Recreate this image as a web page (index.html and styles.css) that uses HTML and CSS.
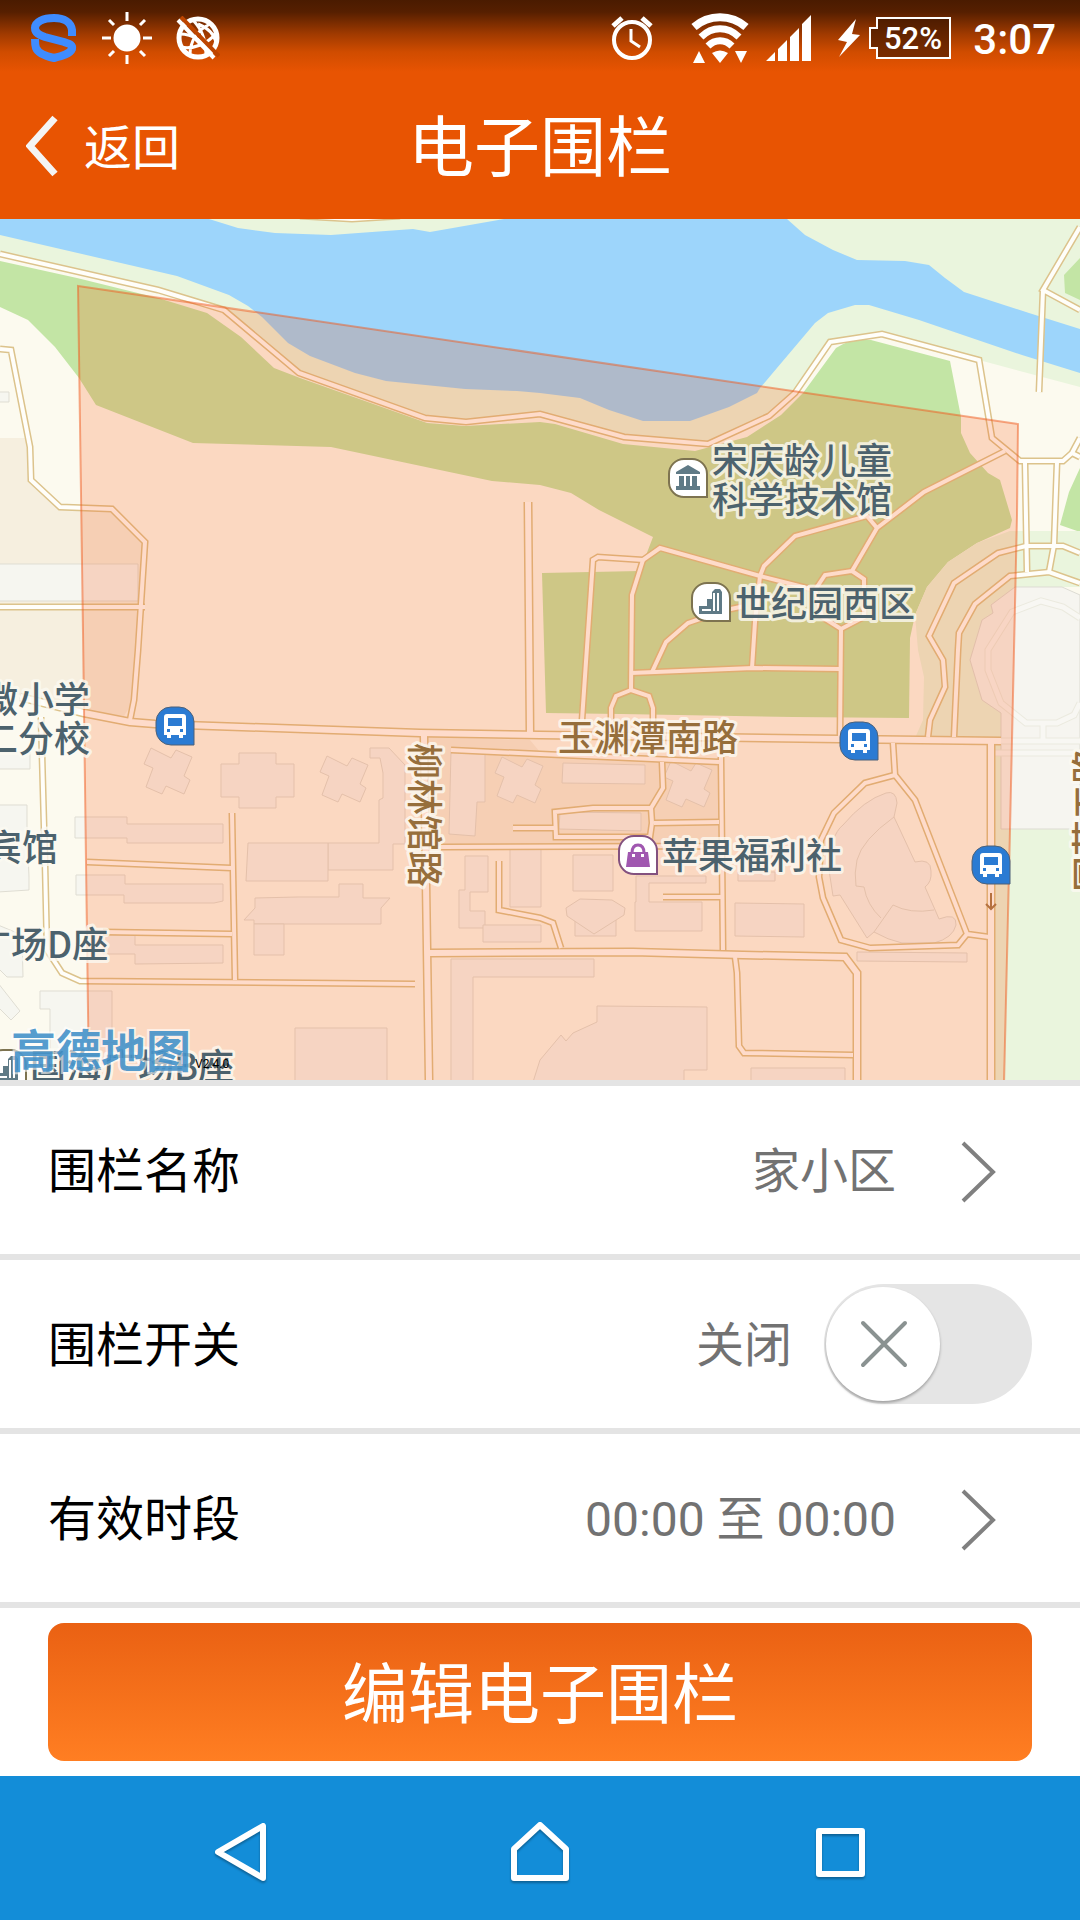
FILE: index.html
```html
<!DOCTYPE html>
<html lang="zh-CN">
<head>
  <meta charset="UTF-8">
  <meta name="viewport" content="width=device-width, initial-scale=1.0">
  <title>电子围栏</title>
  <link rel="stylesheet" href="styles.css">
</head>
<body>

  <div class="top">
    <div class="status-bar">
      <div class="status-left">
        <svg width="48" height="50" viewBox="0 0 48 50" fill="none" stroke="#3f8cff" stroke-width="8">
          <path d="M42 23V17C41 9 34 5 24 5C13 5 5 9 5 15C5 20 9 22 15 24L34 29C40 31 43 32 42 36C40 41 32 43 24 45C15 43 8 40 6 35C5 32 5 29 5 26"/>
        </svg>
        <svg width="50" height="52" viewBox="0 0 50 52" fill="#fff" stroke="#fff" stroke-width="3">
          <circle cx="25" cy="26" r="12"/>
          <path d="M25 0V9M25 43V52M0 26H9M41 26H50M7 8L12 13M38 39L43 44M43 8L38 13M12 39L7 44"/>
        </svg>
        <svg width="44" height="44" viewBox="0 0 44 44" fill="none" stroke="#fff">
          <circle cx="22" cy="22" r="19" stroke-width="5"/>
          <path stroke-width="3" d="M17 4C24 12 30 20 30 40M34 8C22 14 14 24 14 39M4 18C16 18 30 26 34 36M5 31C16 34 32 28 40 17M22 8C32 12 38 18 40 26"/>
          <path stroke="#bd4500" stroke-width="4" d="M5 1L43 40"/>
          <path stroke-width="4" d="M2 4L38 42"/>
        </svg>
      </div>
      <div class="status-right">
        <svg class="alarm" width="42" height="46" viewBox="0 0 42 46" fill="none" stroke="#fff">
          <circle cx="21" cy="25" r="18" stroke-width="4"/>
          <path stroke-width="3" d="M20 14V26L29 32"/>
          <path stroke-width="5" d="M2 11L11 3M40 11L31 3"/>
        </svg>
        <svg class="wifi" width="58" height="50" viewBox="0 0 58 50" fill="none" stroke="#fff">
          <path stroke-width="8" d="M3 14C18 1 40 1 55 14"/>
          <path stroke-width="7" d="M10 24C21 13 37 13 48 24"/>
          <path stroke-width="7" d="M17 33C24 26 34 26 41 33"/>
          <path fill="#fff" stroke="none" d="M21 40Q29 35 37 40L29 50ZM2 50H14L8 38ZM44 38H56L50 50Z"/>
        </svg>
        <svg class="signal" width="46" height="46" viewBox="0 0 46 46" fill="#fff">
          <path d="M0 46L9 37V46ZM12 34L21 25V46H12ZM24 22L33 13V46H24ZM36 9L45 0V46H36Z"/>
        </svg>
        <svg class="bolt" width="24" height="38" viewBox="0 0 24 38" fill="#fff">
          <path d="M19 0L1 21L10 23L2 38L23 16L15 15Z"/>
        </svg>
        <svg class="battery" width="82" height="42" viewBox="0 0 82 42">
          <path d="M8 1H81V41H8V31H1V11H8Z" fill="#3a1500" fill-opacity=".6" stroke="#fff" stroke-width="2"/>
          <text x="44" y="32" text-anchor="middle">52%</text>
        </svg>
        <span class="clock">3:07</span>
      </div>
    </div>

    <header class="app-bar">
      <button class="back">
        <svg width="34" height="62" viewBox="0 0 34 62" fill="none" stroke="#f4f4f4" stroke-width="7">
          <path d="M29 3L4 31L29 59"/>
        </svg>
        返回
      </button>
      <h1>电子围栏</h1>
    </header>
  </div>

  <main>
    <svg class="map" viewBox="0 219 1080 861" role="img" aria-label="高德地图">
      <defs>
        <path id="tower" d="M151 748L171 758L176 750L192 757L184 776L190 780L184 794L166 786L162 794L146 787L153 768L144 764Z"/>
        <g id="small-roads">
          <path d="M0 254L158 290L224 310L299 373L425 418L466 422L540 414L624 437L708 444L769 416L795 393L830 342L882 334L979 360L992 438L1020 461L1063 461L1072 453L1080 438M1072 453L1080 457"/>
          <path d="M300 216L352 219L400 216"/>
          <path d="M0 349L11 350L30 447L31 480L60 507L112 509L145 542L138 650L134 700L130 720M0 607H145"/>
          <path d="M41 717L45 863L47 950L62 973L80 981L415 984"/>
          <path d="M232 813L233 870L235 980M87 862L231 868M103 932L232 934"/>
          <path d="M441 847L721 846M451 750L540 754L719 762M513 828H554M721 757L723 950"/>
          <path d="M662 762L663 788L651 808L593 808L555 812L556 837L650 837L652 823L651 808M654 823L719 822"/>
          <path d="M663 897H721M735 957L737 973L739 1046L744 1053L853 1055"/>
          <path d="M499 861V910L540 918L553 923L561 948"/>
          <path d="M893 743L895 775L865 783L834 813L821 840L819 877L823 898L841 940L870 948L958 945L967 934L915 800L895 775M967 934L989 937"/>
          <path d="M1080 227L1043 290L1080 310M1043 290L1039 392"/>
          <path d="M1025 463L1027 572M1057 462L1054 545L1049 572"/>
          <path d="M1080 553L1063 546H1026L998 553L954 583L929 636L943 660L945 687L930 720L928 737"/>
          <path d="M1080 583L1049 572L1010 576L975 604L959 633L958 650L954 737"/>
        </g>
        <g id="park-paths">
          <path d="M582 720L593 560L598 557L643 560L660 548L760 576L815 590"/>
          <path d="M643 560L632 595L631 690L616 696L611 708V722M631 690L649 696L653 708V722"/>
          <path d="M1005 451L924 492L877 528L852 571L825 575L815 590L822 617L841 629L864 617V579L852 571"/>
          <path d="M841 629L840 737M877 528L867 516L795 536L764 566L760 576L755 622L752 668"/>
          <path d="M745 606L726 610L688 623L666 642L652 672M631 673L753 668L840 669"/>
        </g>
        <g id="main-roads">
          <path d="M20 697L84 713L130 722L155 724L420 733L540 735L840 739L1001 741"/>
          <path d="M528 502L530 733M424 736L426 883L429 1080M991 743V1080"/>
          <path d="M430 953L633 952L743 955L845 957L857 973V1080"/>
        </g>
        <path id="pin" d="M38 38H15A15 15 0 0 1 0 24V15A15 15 0 0 1 15 0H23A15 15 0 0 1 38 15Z"/>
        <g id="bus-stop">
          <use href="#pin" class="pin-bus"/>
          <path fill="#fff" fill-rule="evenodd" d="M11 7H27Q30 7 30 10V28H27V31H23V28H15V31H11V28H8V10Q8 7 11 7ZM12 11V19H26V11ZM11 22V25H14V22ZM24 22V25H27V22Z"/>
        </g>
        <g id="office">
          <use href="#pin" class="pin-poi"/>
          <path d="M7 23H15V16H20V9L23 6H28L30 9V31H7Z" fill="#5f7a86"/>
          <path d="M10 27H19M22 10V28M26 10V28" stroke="#fff" stroke-width="2"/>
        </g>
      </defs>

      <!-- land, parks and water -->
      <rect y="219" width="1080" height="861" fill="#fcfaef"/>
      <path class="shore" d="M0 219H1080V387L979 360L882 332L830 342L795 393L769 416L708 444L624 437L540 414L466 422L425 418L299 373L224 310L158 290L0 254Z"/>
      <path class="water" d="M0 219H209L238 228L275 233L331 235L413 229L430 232L504 219H787L805 235L833 250L857 260L905 261L929 265L945 278L964 292L1029 313L1080 329V373L1022 355L919 320L869 305L855 305L828 313L815 323L760 388L757 393L729 407L690 421L643 421L609 410L580 398L540 393L517 391L465 389L386 381L355 373L310 356L288 343L262 317L248 306L229 295L177 276L0 235Z"/>
      <path class="park" d="M0 261L77 278L158 298L207 313L241 337L274 368L300 378L427 423L465 426L540 422L555 424L623 444L695 451L747 437L781 415L803 393L836 348Q850 338 871 340L950 361L961 417V433L970 453L988 473L1000 480L1012 520L1010 528L977 543L948 562L927 587L915 615L910 638L909 718L793 717L621 714L546 713L542 573L640 571L653 537L599 510L571 493L540 485L492 481L331 447L193 443L96 405L79 378L55 347L28 320L0 307Z"/>
      <path class="park" d="M1080 258L1064 275L1065 293L1080 300ZM1080 468L1069 492L1060 525L1080 532Z"/>
      <path class="block" d="M0 438H26L31 480L60 507L112 509L145 542L138 650L134 700L124 716L84 710L0 690Z"/>
      <path class="block" d="M428 737L530 740L540 752L719 762L721 846H428Z"/>
      <path class="shore" d="M1080 531H1010L977 543L948 562L927 587L915 615L918 650L924 677L923 720L915 738H1001L1015 587H1080Z"/>
      <path class="shore" d="M995 742H1001V829H1080V1080H995Z"/>
      <path class="campus" d="M1080 595L1062 587H1015L991 605L993 613L982 620L970 660L982 700L1001 713V829H1080Z"/>
      <path class="faint" d="M1080 618L1063 607L1041 601L1012 612L988 650V670L1001 703L1026 723L1057 723L1074 715L1080 703M1043 725V740M1001 741H1080M995 753H1080"/>
      <path class="faint-fill" d="M1080 618L1063 607L1041 601L1012 612L988 650V670L1001 703L1026 723L1057 723L1074 715L1080 703M1043 725V740M1001 741H1080M995 753H1080"/>

      <g class="buildings">
        <use href="#tower"/>
        <use href="#tower" x="176" y="8"/>
        <use href="#tower" x="351" y="9"/>
        <use href="#tower" x="520" y="13"/>
        <path d="M-2 564H138V601H-2ZM-2 392H9V402H-2Z"/>
        <path d="M239 753H276V764H294V797H276V808H239V797H221V764H239Z"/>
        <path d="M370 748H389L405 765V844H393V870H328V843H379V800L383 798V773L380 758H370Z"/>
        <path d="M248 843H328V881H246Z"/>
        <path d="M75 817H127V824H223V843H127V838H75Z"/>
        <path d="M76 875H125V884H223V901L214 903H124V895H76Z"/>
        <path d="M103 935H135V945H223V963L135 964V954H103Z"/>
        <path d="M255 898L298 897H339V884H363V898H390L381 908V924H254V920H244L255 908Z"/>
        <path d="M254 924H284V955H254ZM295 1028H387V1082H295Z"/>
        <path d="M451 752H485V802H477L475 836L449 834Z"/>
        <path d="M465 856H488V892H470V911H485V928H459V890H465Z"/>
        <path d="M510 849H541V907H510ZM483 925H541V942H483Z"/>
        <path d="M451 959H594V977H473V1082H451Z"/>
        <path d="M533 1082L540 1060L561 1035L566 1041L573 1033L597 1022V1006L707 1007V1070H684V1082Z"/>
        <path d="M751 1068H845V1082H751ZM735 903L804 904V937L735 936ZM857 952L967 953V962L857 961Z"/>
        <path d="M573 855H613V891H573ZM575 920H616V936H575Z"/>
        <path d="M566 908L580 899L612 900L625 908L624 915L594 934L567 916Z"/>
        <path d="M636 876H706V883H649V902H702V931H635V902H636Z"/>
        <path d="M563 763L645 765V784L562 783ZM560 812L641 813V831L559 829ZM738 872H775V881H738Z"/>
        <path d="M886 793Q896 790 897 803L894 817L915 862Q931 858 931 871Q932 882 925 887L936 912L939 919Q957 912 956 925Q953 938 934 943H902Q888 940 874 932L867 938L840 895L833 896L829 870Q830 835 843 825Q864 800 886 793Z"/>
        <path fill="none" d="M894 817Q862 840 857 860Q854 873 856 886L864 887Q867 905 881 918M874 932L893 905Q910 914 934 910"/>
        <path d="M-2 752H30V769H-2ZM-2 805H27V828L29 877V890L-2 892ZM-2 925L22 935L23 977H7L-2 968ZM-2 983L20 1011L11 1020L-2 1007ZM40 991H112V1060H50V1009H40Z"/>
      </g>

      <use href="#small-roads" class="casing small"/>
      <use href="#park-paths" class="casing small"/>
      <use href="#main-roads" class="casing main"/>
      <use href="#small-roads" class="lane small"/>
      <use href="#park-paths" class="lane small"/>
      <use href="#main-roads" class="lane main"/>

      <!-- fence area -->
      <path class="fence" d="M78 286L1018 424L1017 515L1010 830L1004 1084H89L86 862L83 632Z"/>

      <path d="M991 893V909M986 904L991 909L996 904" fill="none" stroke="#b5713f" stroke-width="2"/>

      <g class="poi-name">
        <text x="712" y="474">宋庆龄儿童</text>
        <text x="712" y="513">科学技术馆</text>
        <text x="735" y="617">世纪园西区</text>
        <text x="662" y="869">苹果福利社</text>
        <text x="-18" y="713">微小学</text>
        <text x="-18" y="752">二分校</text>
        <text x="-14" y="861">宾馆</text>
        <text x="-25" y="958">广场D座</text>
        <text x="30" y="1080">国海广场B座</text>
      </g>
      <g class="road-name">
        <text x="558" y="751">玉渊潭南路</text>
        <text transform="translate(411 743) rotate(90)">柳林馆路</text>
        <text transform="translate(1103 892) rotate(-90)">国苑五路</text>
      </g>

      <use href="#bus-stop" x="156" y="707"/>
      <use href="#bus-stop" x="840" y="722"/>
      <use href="#bus-stop" x="972" y="846"/>
      <use href="#office" x="692" y="583"/>
      <use href="#office" x="-12" y="1050"/>
      <g transform="translate(669 459)">
        <use href="#pin" class="pin-poi"/>
        <path fill="#5f7a86" d="M7 15V13L19 6L31 13V15ZM10 17H15V27H10ZM17 17H21V27H17ZM23 17H28V27H23ZM7 27H31V31H7Z"/>
      </g>
      <g transform="translate(619 836)">
        <use href="#pin" class="pin-shop"/>
        <path fill="#a057b0" d="M9 16H29L31 31H7Z"/>
        <path fill="none" stroke="#a057b0" stroke-width="3" d="M13 17Q13 9 19 9Q25 9 25 17"/>
        <path fill="#fff" d="M13 18H16V21H13ZM22 18H25V21H22Z"/>
      </g>

      <text class="map-logo" x="11" y="1068">高德地图</text>
      <text class="map-version" x="195" y="1068">V2.4.0</text>
    </svg>

    <div class="settings">
      <button class="row">
        <span class="name">围栏名称</span>
        <span class="value">家小区</span>
        <svg class="arrow" width="36" height="62" viewBox="0 0 36 62"><path d="M3 2L33 31L3 60"/></svg>
      </button>
      <div class="row">
        <label class="name" for="fenceSwitch">围栏开关</label>
        <span class="value">关闭</span>
        <span class="switch">
          <input type="checkbox" id="fenceSwitch">
          <svg class="knob" width="114" height="114" viewBox="0 0 114 114"><path d="M37 36L79 78M79 36L37 78"/></svg>
        </span>
      </div>
      <button class="row">
        <span class="name">有效时段</span>
        <span class="value">00:00 至 00:00</span>
        <svg class="arrow" width="36" height="62" viewBox="0 0 36 62"><path d="M3 2L33 31L3 60"/></svg>
      </button>
    </div>

    <div class="actions">
      <button class="edit">编辑电子围栏</button>
    </div>
  </main>

  <nav class="nav-bar">
    <button aria-label="返回">
      <svg width="60" height="60" viewBox="0 0 60 60"><path d="M53 4V56L8 30Z"/></svg>
    </button>
    <button aria-label="主页">
      <svg width="60" height="60" viewBox="0 0 60 60"><path d="M30 3L56 27V56H4V27Z"/></svg>
    </button>
    <button aria-label="最近任务">
      <svg width="60" height="60" viewBox="0 0 60 60"><path d="M9 9H52V52H9Z"/></svg>
    </button>
  </nav>

</body>
</html>
```
FILE: styles.css
```css
* {
  box-sizing: border-box;
}
body {
  margin: 0;
  background-color: #fff;
  font-family: Roboto, "Noto Sans CJK SC", sans-serif;
  color: #000;
}
button {
  border: none;
  padding: 0;
  background: none;
  font: inherit;
  color: inherit;
  cursor: pointer;
}
svg {
  display: block;
}

/* status bar and title */
.top {
  background: linear-gradient(#4a1b00, #561f00 12px, #a03a00 34px, #d04c00 52px, #e85402 72px);
  color: #fff;
}
.status-bar {
  display: flex;
  justify-content: space-between;
  align-items: center;
  height: 75px;
  padding: 0 24px 0 30px;
}
.status-left,
.status-right {
  display: flex;
  align-items: center;
}
.status-left {
  gap: 24px;
}
.alarm {
  margin-right: 38px;
}
.wifi {
  margin-right: 17px;
}
.signal {
  margin-right: 25px;
}
.bolt {
  margin-right: 8px;
}
.battery {
  margin-right: 22px;
}
.battery text {
  font-size: 31px;
  font-weight: 500;
  fill: #fff;
}
.clock {
  padding-top: 4px;
  font-size: 42px;
  font-weight: 500;
  line-height: 48px;
}
.app-bar {
  display: grid;
  grid-template-columns: 1fr auto 1fr;
  align-items: center;
  height: 144px;
  padding-top: 4px;
}
.back {
  display: flex;
  align-items: center;
  justify-self: start;
  gap: 24px;
  padding-left: 26px;
  font-size: 48px;
  line-height: 72px;
}
.back svg {
  margin-bottom: 6px;
}
h1 {
  margin: 0;
  font-size: 66px;
  font-weight: 400;
  line-height: 96px;
}

/* map */
.map {
  width: 100%;
  height: auto;
}
.shore {
  fill: #eaf5dd;
}
.water {
  fill: #9dd5fb;
}
.park {
  fill: #c3e5a5;
}
.block {
  fill: #f6efdf;
}
.campus {
  fill: #f6f5f0;
  stroke: #dddbd3;
}
.faint {
  fill: none;
  stroke: #ebeadf;
  stroke-width: 7;
}
.faint-fill {
  fill: none;
  stroke: #f8f7f3;
  stroke-width: 5;
}
.buildings {
  fill: #f6f6f0;
  stroke: #dfddd3;
}
.casing,
.lane {
  fill: none;
}
.casing {
  stroke: #dcc38c;
}
.lane {
  stroke: #fffefa;
}
.casing.small {
  stroke-width: 7;
}
.lane.small {
  stroke-width: 4;
}
.casing.main {
  stroke-width: 9;
}
.lane.main {
  stroke-width: 6;
}
.fence {
  fill: rgba(248, 82, 10, 0.2);
  stroke: rgba(240, 90, 30, 0.5);
  stroke-width: 2;
}
.poi-name,
.road-name {
  font-family: "Noto Sans CJK SC", sans-serif;
  font-size: 36px;
  font-weight: 500;
  stroke: rgba(252, 250, 242, 0.8);
  stroke-width: 6;
  stroke-linejoin: round;
  paint-order: stroke;
}
.poi-name {
  fill: #4c626d;
}
.road-name {
  fill: #966e3b;
}
.pin-bus {
  fill: #2b7bd3;
  stroke: #4d6178;
}
.pin-poi {
  fill: #fff;
  stroke: #7d7350;
  stroke-width: 2;
}
.pin-shop {
  fill: #fff;
  stroke: #83517f;
  stroke-width: 2;
}
.map-logo {
  font-family: "Noto Sans CJK SC", sans-serif;
  font-size: 45px;
  font-weight: 700;
  fill: #3f8fc8;
  fill-opacity: 0.88;
  stroke: rgba(255, 255, 255, 0.6);
  stroke-width: 4;
  paint-order: stroke;
}
.map-version {
  font-size: 12px;
}

/* settings list */
.settings {
  border-top: 6px solid #e4e4e4;
}
.row {
  display: flex;
  align-items: center;
  width: 100%;
  height: 174px;
  padding: 0 48px;
  border-bottom: 6px solid #e4e4e4;
  font-size: 48px;
  line-height: 72px;
  text-align: left;
}
.name,
.value {
  padding-top: 4px;
}
.name {
  flex: 1;
}
.value {
  color: #727272;
}
.arrow {
  margin: 4px 36px 0 64px;
  fill: none;
  stroke: #808080;
  stroke-width: 4;
}
.switch {
  position: relative;
  margin-left: 32px;
}
.switch input {
  display: block;
  appearance: none;
  width: 208px;
  height: 120px;
  margin: 0;
  border-radius: 60px;
  background-color: #e5e5e5;
}
.knob {
  position: absolute;
  top: 3px;
  left: 2px;
  border-radius: 50%;
  background-color: #fff;
  box-shadow: 0 2px 3px rgba(0, 0, 0, 0.3);
  fill: none;
  stroke: #8a9291;
  stroke-width: 4;
  stroke-linecap: round;
  pointer-events: none;
}
.switch input:checked + .knob {
  left: 92px;
}
.actions {
  padding: 15px 48px;
}
.edit {
  width: 100%;
  height: 138px;
  padding-top: 8px;
  border-radius: 16px;
  background: linear-gradient(#ea6113, #ff7e22);
  color: #fff;
  font-size: 66px;
  line-height: 96px;
}

/* system navigation */
.nav-bar {
  display: grid;
  grid-template-columns: repeat(3, 1fr);
  height: 144px;
  padding: 0 90px;
  background-color: #138dd8;
}
.nav-bar button {
  display: flex;
  align-items: center;
  justify-content: center;
}
.nav-bar svg {
  margin-top: 8px;
  fill: none;
  stroke: #fff;
  stroke-width: 6;
  stroke-linejoin: round;
  filter: drop-shadow(0 2px 1px rgba(0, 0, 0, 0.3));
}
```
